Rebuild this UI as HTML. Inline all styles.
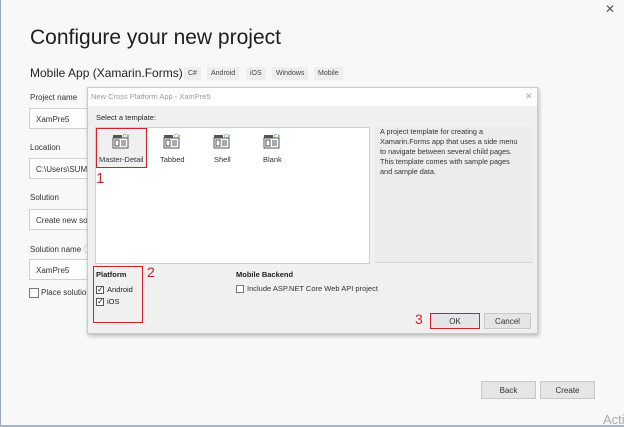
<!DOCTYPE html>
<html><head><meta charset="utf-8"><style>
*{margin:0;padding:0;box-sizing:border-box}
body{width:624px;height:427px;background:#f8f8f8;font-family:"Liberation Sans",sans-serif;position:relative;overflow:hidden;color:#222}
.a{position:absolute;white-space:nowrap}
.lbl{font-size:8px;color:#333}
.inp{position:absolute;left:29px;width:70px;height:21px;background:#fdfdfd;border:1px solid #cfcfcf;font-size:8px;color:#333;padding:6px 0 0 6px}
.tag{position:absolute;top:67px;height:13px;background:#eeeeee;font-size:7px;color:#444;padding:3px 4px 0}
.btn{position:absolute;background:#e5e5e5;border:1px solid #c8c8c8;font-size:8px;color:#333;text-align:center}
.cb{position:absolute;width:8px;height:8px;border:1px solid #555;background:#fff;font-size:8px;line-height:6px;text-align:center}
.red{color:#d0202a;font-size:14px}
.ic{position:absolute;width:18px;height:16px}
.tl{position:absolute;font-size:7.5px;color:#333;top:155px}
</style></head><body>
<div class="a" style="left:0;top:0;width:1px;height:427px;background:#9aa8ba"></div>
<div class="a" style="left:0;top:425px;width:624px;height:2px;background:#a8b4c4"></div>
<div class="a" style="left:605px;top:2px;font-size:12px;color:#555">✕</div>
<div class="a" style="left:30px;top:26px;font-size:21px;color:#1e1e1e">Configure your new project</div>
<div class="a" style="left:30px;top:66px;font-size:12px;color:#222">Mobile App (Xamarin.Forms)</div>
<div class="tag" style="left:184px">C#</div>
<div class="tag" style="left:207px">Android</div>
<div class="tag" style="left:246px">iOS</div>
<div class="tag" style="left:272px">Windows</div>
<div class="tag" style="left:314px">Mobile</div>
<div class="a lbl" style="left:30px;top:93px">Project name</div>
<div class="inp" style="top:108px">XamPre5</div>
<div class="a lbl" style="left:30px;top:143px">Location</div>
<div class="inp" style="top:158px">C:\Users\SUMIT</div>
<div class="a lbl" style="left:30px;top:193px">Solution</div>
<div class="inp" style="top:209px">Create new solu</div>
<div class="a lbl" style="left:30px;top:244px">Solution name <span style="color:#3a8fd0">ⓘ</span></div>
<div class="inp" style="top:259px">XamPre5</div>
<div class="a" style="left:29px;top:288px;width:10px;height:10px;border:1px solid #777;background:#fff"></div>
<div class="a lbl" style="left:41px;top:288px">Place solution</div>
<div class="btn" style="left:481px;top:381px;width:55px;height:18px;padding-top:4px">Back</div>
<div class="btn" style="left:540px;top:381px;width:55px;height:18px;padding-top:4px">Create</div>
<div class="a" style="left:603px;top:412px;font-size:13px;color:#aaa">Acti</div>

<div class="a" style="left:87px;top:87px;width:451px;height:247px;background:#f0f0f0;border:1px solid #c9c9c9;box-shadow:1px 2px 4px rgba(0,0,0,.25)"></div>
<div class="a" style="left:88px;top:88px;width:449px;height:18px;background:#fff"></div>
<div class="a" style="left:91px;top:92px;font-size:7.5px;color:#999">New Cross Platform App - XamPre5</div>
<div class="a" style="left:525px;top:91px;font-size:9px;color:#aaa">✕</div>
<div class="a" style="left:96px;top:113px;font-size:7.5px;color:#222">Select a template:</div>
<div class="a" style="left:95px;top:127px;width:275px;height:137px;background:#fff;border:1px solid #cfcfcf"></div>
<div class="a" style="left:375px;top:127px;width:158px;height:136px;background:#ececec;border-bottom:1px solid #d5d5d5"></div>
<div class="a" style="left:380px;top:127px;font-size:7.3px;line-height:10px;color:#333;white-space:normal;width:140px">A project template for creating a Xamarin.Forms app that uses a side menu to navigate between several child pages. This template comes with sample pages and sample data.</div>

<div class="a" style="left:96px;top:128px;width:51px;height:40px;border:1.5px solid #d0202a;background:#f0f0f0"></div>
<svg class="ic" style="left:112px;top:133px" viewBox="0 0 18 16"><rect x="1" y="2" width="9" height="3" fill="#555"/><rect x="1" y="5" width="15" height="10" fill="#fff" stroke="#555"/><rect x="3" y="7" width="4" height="6" fill="none" stroke="#555"/><path d="M9 8h5M9 10h5M9 12h5" stroke="#555"/><text x="11" y="5" font-size="5" fill="#3a9a3a" font-family="Liberation Sans">C#</text></svg>
<svg class="ic" style="left:163px;top:133px" viewBox="0 0 18 16"><rect x="1" y="2" width="9" height="3" fill="#555"/><rect x="1" y="5" width="15" height="10" fill="#fff" stroke="#555"/><rect x="3" y="7" width="4" height="6" fill="none" stroke="#555"/><path d="M9 8h5M9 10h5M9 12h5" stroke="#555"/><text x="11" y="5" font-size="5" fill="#3a9a3a" font-family="Liberation Sans">C#</text></svg>
<svg class="ic" style="left:213px;top:133px" viewBox="0 0 18 16"><rect x="1" y="2" width="9" height="3" fill="#555"/><rect x="1" y="5" width="15" height="10" fill="#fff" stroke="#555"/><rect x="3" y="7" width="4" height="6" fill="none" stroke="#555"/><path d="M9 8h5M9 10h5M9 12h5" stroke="#555"/><text x="11" y="5" font-size="5" fill="#3a9a3a" font-family="Liberation Sans">C#</text></svg>
<svg class="ic" style="left:263px;top:133px" viewBox="0 0 18 16"><rect x="1" y="2" width="9" height="3" fill="#555"/><rect x="1" y="5" width="15" height="10" fill="#fff" stroke="#555"/><rect x="3" y="7" width="4" height="6" fill="none" stroke="#555"/><path d="M9 8h5M9 10h5M9 12h5" stroke="#555"/><text x="11" y="5" font-size="5" fill="#3a9a3a" font-family="Liberation Sans">C#</text></svg>
<div class="tl" style="left:99px">Master-Detail</div>
<div class="tl" style="left:160px">Tabbed</div>
<div class="tl" style="left:214px">Shell</div>
<div class="tl" style="left:263px">Blank</div>
<div class="a red" style="left:96px;top:170px;font-size:15px">1</div>

<div class="a" style="left:93px;top:266px;width:50px;height:57px;border:1.5px solid #d0202a"></div>
<div class="a" style="left:96px;top:270px;font-size:7.5px;font-weight:bold">Platform</div>
<div class="cb" style="left:96px;top:286px">✓</div><div class="a" style="left:107px;top:285px;font-size:7.5px">Android</div>
<div class="cb" style="left:96px;top:298px">✓</div><div class="a" style="left:107px;top:297px;font-size:7.5px">iOS</div>
<div class="a red" style="left:147px;top:264px">2</div>
<div class="a" style="left:236px;top:270px;font-size:7.5px;font-weight:bold">Mobile Backend</div>
<div class="cb" style="left:236px;top:285px;border-color:#777"></div><div class="a" style="left:247px;top:284px;font-size:7.5px;color:#333">Include ASP.NET Core Web API project</div>
<div class="a red" style="left:415px;top:311px">3</div>
<div class="btn" style="left:430px;top:313px;width:50px;height:16px;padding-top:3px;border:1.5px solid #d0202a">OK</div>
<div class="btn" style="left:484px;top:313px;width:47px;height:16px;padding-top:3px">Cancel</div>
</body></html>
